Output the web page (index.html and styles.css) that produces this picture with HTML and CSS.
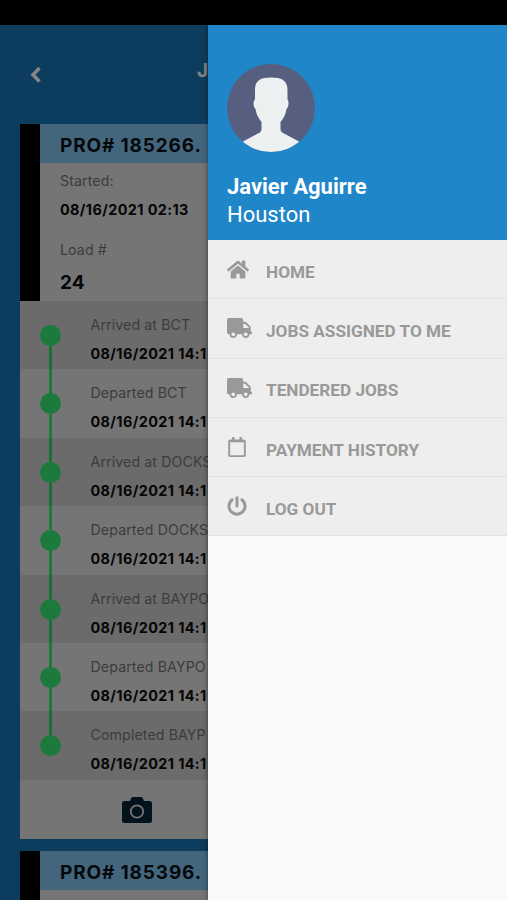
FILE: index.html
```html
<!DOCTYPE html>
<html lang="en">
<head>
  <meta charset="UTF-8">
  <meta name="viewport" content="width=device-width, initial-scale=1">
  <title>Jobs</title>
  <link rel="stylesheet" href="styles.css">
</head>
<body>

<svg class="sprite" width="0" height="0">
  <symbol id="icon-truck" viewBox="0 0 640 512">
    <path d="M624 352h-16V243.900c0-12.700-5.100-24.900-14.100-33.900L494 110.100c-9-9-21.200-14.100-33.900-14.100H416V48c0-26.500-21.500-48-48-48H48C21.500 0 0 21.500 0 48v320c0 26.500 21.500 48 48 48h16c0 53 43 96 96 96s96-43 96-96h128c0 53 43 96 96 96s96-43 96-96h48c8.800 0 16-7.200 16-16v-32c0-8.800-7.200-16-16-16zM160 464c-26.500 0-48-21.500-48-48s21.500-48 48-48 48 21.500 48 48-21.500 48-48 48zm320 0c-26.500 0-48-21.500-48-48s21.500-48 48-48 48 21.500 48 48-21.500 48-48 48zm80-208H416V144h44.100l99.900 99.900V256z"/>
  </symbol>
</svg>

<div class="screen">
  <div class="status-bar"></div>

  <div class="jobs">
    <div class="topbar">
      <svg class="back" viewBox="0 0 12 18"><path d="M10 2L3.500 8.700l6.500 6.700"/></svg>
      <span class="title">J</span>
    </div>

    <div class="card">
      <div class="card-top">
        <div class="strip"></div>
        <div class="card-info">
          <h2>PRO# 185266.</h2>
          <div class="details">
            <p class="label">Started:</p>
            <p class="value">08/16/2021 02:13</p>
            <p class="label load">Load #</p>
            <p class="number">24</p>
          </div>
        </div>
      </div>

      <div class="timeline">
        <div class="step"><div class="dot"></div><div><p class="label">Arrived at BCT</p><p class="value">08/16/2021 14:1</p></div></div>
        <div class="step"><div class="dot"></div><div><p class="label">Departed BCT</p><p class="value">08/16/2021 14:1</p></div></div>
        <div class="step"><div class="dot"></div><div><p class="label">Arrived at DOCKS</p><p class="value">08/16/2021 14:1</p></div></div>
        <div class="step"><div class="dot"></div><div><p class="label">Departed DOCKS</p><p class="value">08/16/2021 14:1</p></div></div>
        <div class="step"><div class="dot"></div><div><p class="label">Arrived at BAYPO</p><p class="value">08/16/2021 14:1</p></div></div>
        <div class="step"><div class="dot"></div><div><p class="label">Departed BAYPO</p><p class="value">08/16/2021 14:1</p></div></div>
        <div class="step"><div class="dot"></div><div><p class="label">Completed BAYP</p><p class="value">08/16/2021 14:1</p></div></div>
      </div>

      <div class="card-foot">
        <svg class="camera" viewBox="0 0 30 26">
          <path d="M2.500 4H8l1-2.500Q9.600 0 11 0h8q1.400 0 2 1.500L22 4h5.500Q30 4 30 6.500v17q0 2.500-2.500 2.500h-25Q0 26 0 23.500v-17Q0 4 2.500 4z"/>
          <circle cx="15" cy="14.500" r="6.200"/>
        </svg>
      </div>
    </div>

    <div class="card">
      <div class="card-top">
        <div class="strip"></div>
        <div class="card-info">
          <h2>PRO# 185396.</h2>
          <div class="details"></div>
        </div>
      </div>
    </div>
  </div>

  <div class="drawer">
    <div class="profile">
      <svg class="avatar" viewBox="0 0 88 88">
        <defs><clipPath id="round"><circle cx="44" cy="44" r="44"/></clipPath></defs>
        <g clip-path="url(#round)">
          <rect width="88" height="88" fill="#565f80"/>
          <path fill="#ecf0f1" d="M44 13.500C34 13.500 28 16 28 26V35.500C26 36 26 43.500 28.500 45C29.500 51 31.500 54 34.500 58V65C34.500 67.500 33 68.500 30 70L16 77.500V88H72V77.500L58 70C55 68.500 53.500 67.500 53.500 65V58C56.500 54 58.500 51 59.500 45C62 43.500 62 36 60.500 35.500V26C60.500 16 54 13.500 44 13.500z"/>
        </g>
      </svg>
      <p class="name">Javier Aguirre</p>
      <p class="city">Houston</p>
    </div>

    <ul class="menu">
      <li>
        <svg class="home" viewBox="0 0 24 20"><path d="M12 5.600L4 12.200V19q0 .8.800.8h4.600q.8 0 .8-.8v-4.500h3.600V19q0 .8.800.8h4.600q.8 0 .8-.8v-6.800z"/><path d="M23.700 9.700L20 6.600V.8q0-.6-.6-.6h-2.500q-.6 0-.6.600v2.800L13.400 1.100q-1.400-1.100-2.800 0L.3 9.700q-.5.400-.1.900l1 1.200q.4.500.9.100L12 3.800l9.900 8.100q.5.400.9-.1l1-1.200q.4-.5-.1-.9z"/></svg>
        <span>HOME</span>
      </li>
      <li><svg class="truck"><use href="#icon-truck"/></svg><span>JOBS ASSIGNED TO ME</span></li>
      <li><svg class="truck"><use href="#icon-truck"/></svg><span>TENDERED JOBS</span></li>
      <li>
        <svg class="calendar" viewBox="0 0 448 512"><path d="M400 64h-48V12c0-6.600-5.400-12-12-12h-40c-6.600 0-12 5.400-12 12v52H160V12c0-6.600-5.400-12-12-12h-40c-6.600 0-12 5.400-12 12v52H48C21.500 64 0 85.500 0 112v352c0 26.500 21.500 48 48 48h352c26.500 0 48-21.500 48-48V112c0-26.500-21.500-48-48-48zm-6 400H54c-3.300 0-6-2.700-6-6V136h352v322c0 3.300-2.700 6-6 6z"/></svg>
        <span>PAYMENT HISTORY</span>
      </li>
      <li>
        <svg class="power" viewBox="0 0 20 20"><path d="M5.200 3.800A8 8 0 1 0 14.800 3.800M10 1.800v8.200" fill="none" stroke="#999" stroke-width="3" stroke-linecap="round"/></svg>
        <span>LOG OUT</span>
      </li>
    </ul>
  </div>
</div>

</body>
</html>
```
FILE: styles.css
```css
* {
  box-sizing: border-box;
}

body {
  margin: 0;
  font-family: Inter, Arial, sans-serif;
  background: #000;
}

p, h2, ul {
  margin: 0;
  padding: 0;
}

.sprite {
  position: absolute;
}

.screen {
  position: relative;
  width: 507px;
  height: 900px;
  overflow: hidden;
  background: #0d3d5e;
}

.status-bar {
  height: 25px;
  background: #000;
}

/* jobs page, dimmed behind the drawer */
.topbar {
  height: 99px;
  display: flex;
  align-items: center;
  padding-left: 29px;
}

.back {
  width: 13px;
  height: 18px;
  fill: none;
  stroke: #858585;
  stroke-width: 3.6;
}

.title {
  margin: -8px 0 0 155px;
  font-size: 19px;
  font-weight: 700;
  color: #858585;
}

.card {
  margin: 0 20px 12px;
  background: #757575;
}

.card-top {
  display: flex;
}

.strip {
  width: 20px;
  background: #000;
}

.card-info {
  flex: 1;
}

h2 {
  height: 39px;
  padding-left: 20px;
  background: #44667d;
  color: #05090c;
  font-size: 19px;
  line-height: 43px;
  font-weight: 700;
  letter-spacing: 0.85px;
}

.details {
  height: 138px;
  padding: 8px 0 0 20px;
}

.label {
  height: 20px;
  font-size: 14.2px;
  line-height: 20px;
  letter-spacing: 0.1px;
  color: #3c3c3c;
  white-space: nowrap;
}

.value {
  height: 20px;
  margin-top: 9px;
  font-size: 14.4px;
  line-height: 20px;
  font-weight: 700;
  letter-spacing: 0.4px;
  color: #050505;
  white-space: nowrap;
}

.load {
  margin-top: 20px;
}

.number {
  margin-top: 11px;
  font-size: 19px;
  line-height: 24px;
  font-weight: 700;
  color: #050505;
}

.timeline {
  background: linear-gradient(#1c7a3d, #1c7a3d) 29px 34px / 3px 410px no-repeat;
}

.step {
  display: flex;
  height: 68.400px;
  padding: 14px 0 0 20px;
}

.step:nth-child(odd) {
  background: rgba(0, 0, 0, 0.08);
}

.dot {
  width: 21px;
  height: 21px;
  margin: 10px 29.500px 0 0;
  border-radius: 50%;
  background: #1c7a3d;
}

.card-foot {
  height: 59px;
  padding: 17px 0 0 101.500px;
}

.camera {
  display: block;
  width: 30px;
  height: 26px;
  fill: #03131e;
}

.camera circle {
  fill: none;
  stroke: #757575;
  stroke-width: 1.8;
}

/* drawer */
.drawer {
  position: absolute;
  top: 25px;
  right: 0;
  bottom: 0;
  width: 299.500px;
  background: #fafafa;
  font-family: Roboto, Arial, sans-serif;
  box-shadow: 0 0 5px rgba(0, 0, 0, 0.5);
}

.profile {
  height: 215px;
  padding: 39px 0 0 19.500px;
  background: #2086ca;
  color: #fff;
}

.avatar {
  display: block;
  width: 88px;
  height: 88px;
}

.name {
  margin-top: 21px;
  font-size: 22px;
  line-height: 28px;
  font-weight: 700;
}

.city {
  font-size: 22px;
  line-height: 27px;
}

.menu {
  list-style: none;
}

.menu li {
  display: flex;
  align-items: center;
  height: 59.300px;
  padding-left: 19.500px;
  background: #eee;
  border-bottom: 1px solid #e2e2e2;
  color: #999;
  font-size: 17.200px;
  font-weight: 700;
}

.menu svg {
  flex: none;
  fill: #999;
}

.menu span {
  margin-top: 5px;
}

.home {
  width: 22px;
  height: 19px;
  margin-right: 17px;
}

.truck {
  width: 25px;
  height: 20px;
  margin-right: 14px;
}

.calendar {
  width: 18px;
  height: 20px;
  margin: 0 20px 0 1px;
}

.power {
  width: 20px;
  height: 20px;
  margin-right: 19px;
}
```
